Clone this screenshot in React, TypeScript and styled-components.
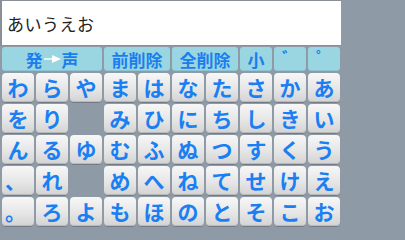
import styled, { createGlobalStyle } from 'styled-components';
import { FC } from 'react';

const GlobalStyle = createGlobalStyle`
  html, body {
    margin: 0;
    padding: 0;
    background: #8e9aa6;
    overflow: hidden;
  }
`;

const Screen = styled.div`
  display: flex;
  flex-direction: row;
  width: 405px;
  height: 228px;
  background: #8e9aa6;
`;

const Panel = styled.div`
  display: flex;
  flex-direction: column;
  width: 341px;
`;

const InputBox = styled.div`
  box-sizing: border-box;
  height: 46px;
  background: #ffffff;
  border: 1px solid #8a8f95;
  border-right: none;
  border-left-width: 2px;
  display: flex;
  align-items: center;
  padding-left: 5px;
  font-family: 'Noto Sans CJK JP', sans-serif;
  font-size: 17px;
  color: #222;
  letter-spacing: 0.5px;
`;

const Keys = styled.div`
  display: grid;
  grid-template-columns: repeat(10, 32px);
  grid-template-rows: 24px repeat(5, 29px);
  gap: 2px;
  padding: 1px 0 0 2px;
  font-family: 'Noto Sans CJK JP', sans-serif;
  font-weight: 700;
`;

const ToolKey = styled.div<{ span: number }>`
  grid-column: span ${({ span }) => span};
  background: #9ad5e2;
  border-radius: 3px;
  color: #1a7fee;
  font-size: 17px;
  display: flex;
  align-items: center;
  justify-content: center;
  line-height: 1;
  box-shadow: inset 0 -1px 0 rgba(0, 0, 0, 0.08);
`;

const MarkKey = styled(ToolKey)`
  align-items: flex-start;
  padding-top: 2px;
  font-size: 16px;
`;

const Key = styled.div<{ low?: boolean }>`
  background: linear-gradient(#f7f7f7, #e6e6e6 55%, #d3d3d3);
  border-radius: 4px;
  box-shadow: inset 0 -1px 0 #b9b9b9, 0 1px 0 rgba(60, 70, 80, 0.35);
  color: #1a7ff2;
  font-size: 21px;
  line-height: 1;
  display: flex;
  align-items: ${({ low }) => (low ? 'flex-end' : 'center')};
  justify-content: ${({ low }) => (low ? 'flex-start' : 'center')};
  padding: ${({ low }) => (low ? '0 0 4px 3px' : '0')};
`;

const Blank = styled.div``;

const Arrow: FC = () => (
  <svg width="17" height="10" viewBox="0 0 17 10" style={{ margin: '0 1px' }}>
    <line x1="0" y1="5" x2="9" y2="5" stroke="#fff" strokeWidth="1.4" />
    <polygon points="8,1 17,5 8,9" fill="#fff" />
  </svg>
);

const grid: string[][] = [
  ['わ', 'ら', 'や', 'ま', 'は', 'な', 'た', 'さ', 'か', 'あ'],
  ['を', 'り', '', 'み', 'ひ', 'に', 'ち', 'し', 'き', 'い'],
  ['ん', 'る', 'ゆ', 'む', 'ふ', 'ぬ', 'つ', 'す', 'く', 'う'],
  ['、', 'れ', '', 'め', 'へ', 'ね', 'て', 'せ', 'け', 'え'],
  ['。', 'ろ', 'よ', 'も', 'ほ', 'の', 'と', 'そ', 'こ', 'お'],
];

export default function App() {
  return (
    <>
      <GlobalStyle />
      <Screen>
        <Panel>
          <InputBox>あいうえお</InputBox>
          <Keys>
            <ToolKey span={3}>
              発<Arrow />声
            </ToolKey>
            <ToolKey span={2}>前削除</ToolKey>
            <ToolKey span={2}>全削除</ToolKey>
            <ToolKey span={1}>小</ToolKey>
            <MarkKey span={1}>゛</MarkKey>
            <MarkKey span={1}>゜</MarkKey>
            {grid.flatMap((row, r) =>
              row.map((ch, c) =>
                ch ? (
                  <Key key={`${r}-${c}`} low={ch === '、' || ch === '。'}>
                    {ch}
                  </Key>
                ) : (
                  <Blank key={`${r}-${c}`} />
                ),
              ),
            )}
          </Keys>
        </Panel>
      </Screen>
    </>
  );
}
